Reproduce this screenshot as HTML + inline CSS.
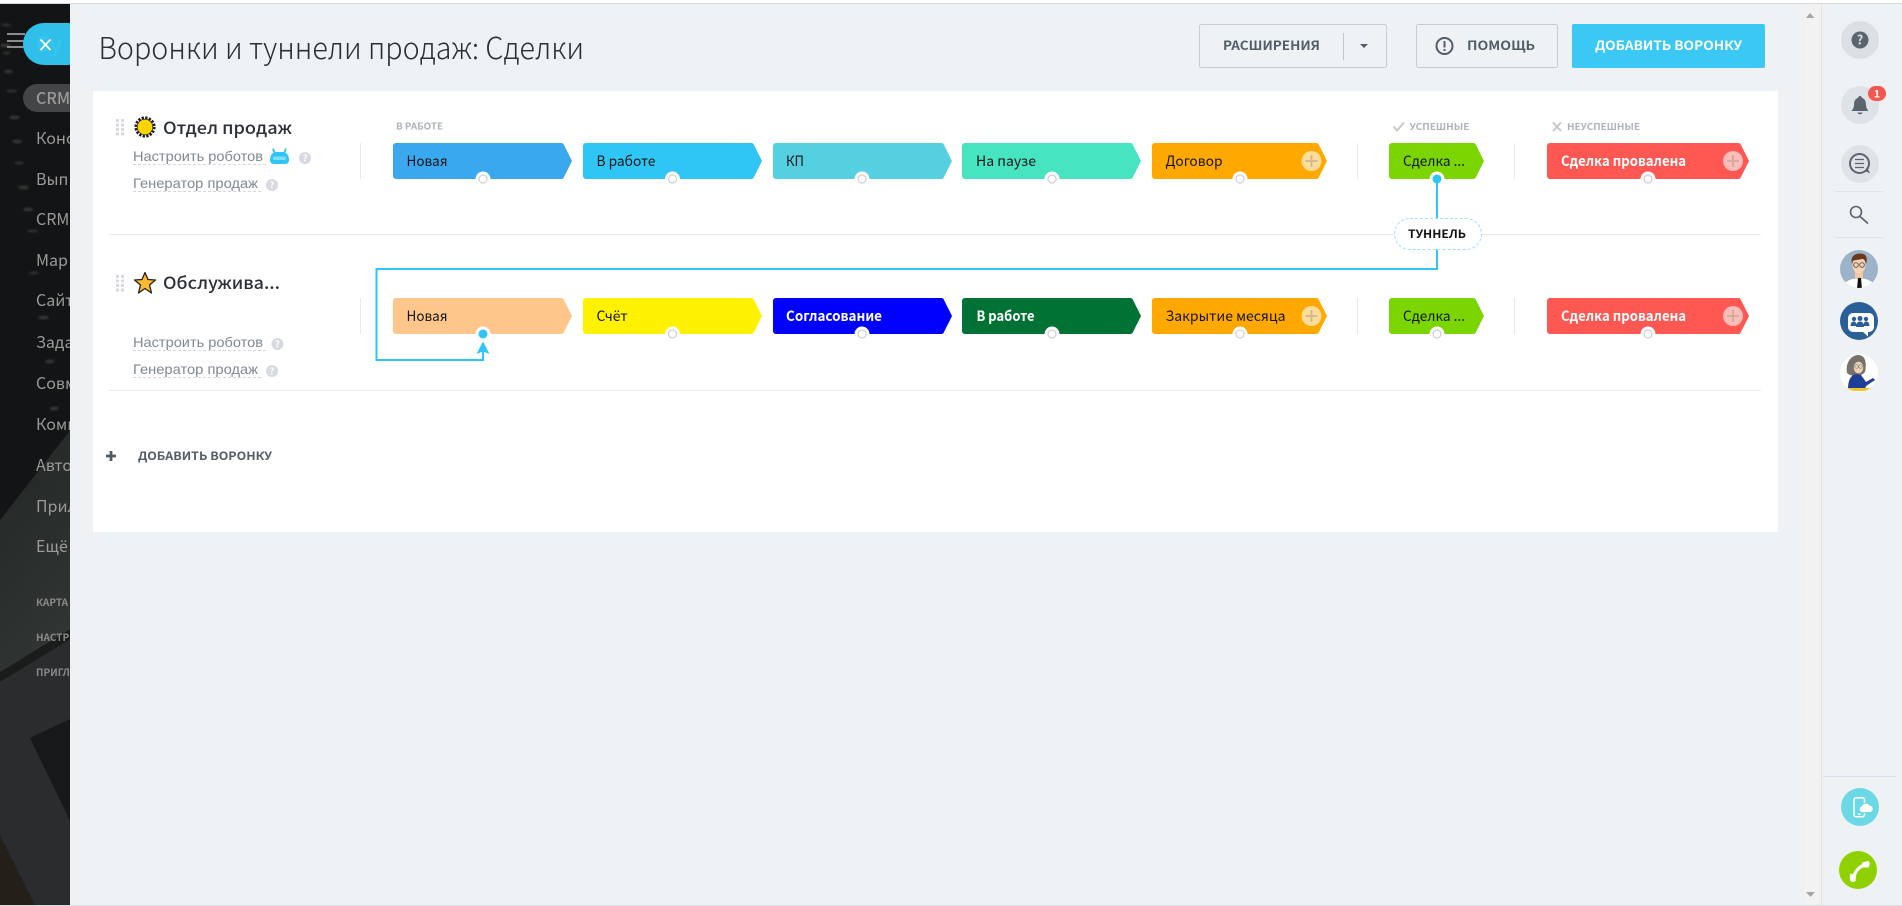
<!DOCTYPE html>
<html lang="ru"><head><meta charset="utf-8"><title>Воронки и туннели продаж: Сделки</title>
<style>
html,body{margin:0;padding:0;width:1902px;height:906px;overflow:hidden;background:#fff}
svg{display:block}
text{font-family:"Noto Sans CJK SC","Liberation Sans",sans-serif}
.c{font-size:14px;fill:#151515}
.w{font-size:14px;fill:#fff;font-weight:700}
.l{font-family:"Liberation Sans","Noto Sans CJK SC",sans-serif;font-size:14px;fill:#808892}
.m{font-size:16px;fill:#9a9a9a}
.s{font-size:10px;fill:#8a8a8a;font-weight:700}
.h{font-size:9.500px;fill:#aeb3ba;font-weight:700}
.t{font-size:17px;fill:#2b2f36;font-weight:500}
.b{font-size:12.500px;font-weight:700;fill:#535c69}
.q{font-size:9px;font-weight:700;fill:#fff;text-anchor:middle}
</style></head><body>
<svg xmlns="http://www.w3.org/2000/svg" width="1902" height="906" viewBox="0 0 1902 906">
<defs>
<path id="c179" d="M0 3a3 3 0 0 1 3-3H168a3 3 0 0 1 3 2L179 18L171 34a3 3 0 0 1-3 2H3a3 3 0 0 1-3-3Z"/>
<path id="c175" d="M0 3a3 3 0 0 1 3-3H164a3 3 0 0 1 3 2L175 18L167 34a3 3 0 0 1-3 2H3a3 3 0 0 1-3-3Z"/>
<path id="c95" d="M0 3a3 3 0 0 1 3-3H84a3 3 0 0 1 3 2L95 18L87 34a3 3 0 0 1-3 2H3a3 3 0 0 1-3-3Z"/>
<path id="c202" d="M0 3a3 3 0 0 1 3-3H191a3 3 0 0 1 3 2L202 18L194 34a3 3 0 0 1-3 2H3a3 3 0 0 1-3-3Z"/>
<g id="dot"><circle r="7.500" fill="#fff"/><circle r="4" fill="#fff" stroke="#cfd2d6" stroke-width="1.300"/></g>
<g id="plus"><circle r="10" fill="#fff" fill-opacity=".6"/><path d="M-6 0H6M0-6V6" stroke="#b3a48a" stroke-opacity=".65" stroke-width="1.800"/></g>
<g id="drag" fill="#d5d8dc"><rect x="0" y="0" width="3" height="3"/><rect x="5" y="0" width="3" height="3"/><rect x="0" y="4.500" width="3" height="3"/><rect x="5" y="4.500" width="3" height="3"/><rect x="0" y="9" width="3" height="3"/><rect x="5" y="9" width="3" height="3"/><rect x="0" y="13.500" width="3" height="3"/><rect x="5" y="13.500" width="3" height="3"/></g>
<clipPath id="a1"><circle cx="1859" cy="269" r="19"/></clipPath>
<clipPath id="a3"><circle cx="1859" cy="373" r="19"/></clipPath>
<linearGradient id="sb" x1="0" y1="0" x2="0.35" y2="1"><stop offset="0" stop-color="#1a1b1a"/><stop offset=".3" stop-color="#262a29"/><stop offset="1" stop-color="#303433"/></linearGradient>
<filter id="bl" x="-20%" y="-20%" width="140%" height="140%"><feGaussianBlur stdDeviation="1"/></filter>
</defs>

<rect width="1902" height="906" fill="#fff"/>
<rect x="0" y="3" width="1902" height="1" fill="#d9dcdf"/>

<!-- left sidebar -->
<rect x="0" y="4" width="72" height="901" fill="#131415"/>
<polygon points="0,520 72,428 72,647 0,673" fill="url(#sb)"/>
<polygon points="0,672 72,628 72,640 0,684" fill="#1a1c1c"/>
<polygon points="0,682 72,638 72,905 0,905" fill="#2a2c2e"/>
<polygon points="30,738 72,718 72,825" fill="#171819"/>
<polygon points="0,835 35,905 0,905" fill="#241f19"/>
<g fill="#3a3a3a" filter="url(#bl)"><rect x="2" y="24" width="8" height="2"/><rect x="1" y="44" width="9" height="3"/><rect x="3" y="52" width="7" height="2"/><rect x="5" y="70" width="7" height="3"/><rect x="7" y="90" width="9" height="2"/><rect x="10" y="116" width="9" height="3"/><rect x="13" y="140" width="8" height="3"/><rect x="15" y="162" width="8" height="2"/><rect x="19" y="186" width="9" height="3"/><rect x="24" y="208" width="8" height="3"/><rect x="28" y="230" width="9" height="2"/><rect x="30" y="272" width="8" height="2"/><rect x="39" y="316" width="9" height="3"/><rect x="46" y="360" width="8" height="3"/><rect x="50" y="407" width="8" height="3"/></g>

<g fill="#8c8c8c"><rect x="7" y="33" width="18" height="2"/><rect x="7" y="40" width="18" height="2"/><rect x="7" y="46" width="18" height="2"/></g>
<path d="M72 23H44a21 21 0 0 0 0 42H72Z" fill="#2fbfe9"/>
<text x="36" y="52" font-size="21" fill="#37c4ee" font-weight="700">Бу</text>
<path d="M40.500 39.500L50.500 50M50.500 39.500L40.500 50" stroke="#fff" stroke-width="1.800" fill="none"/>
<rect x="23" y="84" width="70" height="28" rx="14" fill="#444546"/>
<text class="m" x="36" y="104" font-weight="500">CRM</text>
<text class="m" x="36" y="144">Конс</text>
<text class="m" x="36" y="185">Вып</text>
<text class="m" x="36" y="225">CRM</text>
<text class="m" x="36" y="266">Мар</text>
<text class="m" x="36" y="306">Сайт</text>
<text class="m" x="36" y="348">Зада</text>
<text class="m" x="36" y="389">Совм</text>
<text class="m" x="36" y="430">Комм</text>
<text class="m" x="36" y="471">Авто</text>
<text class="m" x="36" y="512">Прил</text>
<text class="m" x="36" y="552">Ещё</text>
<text class="s" x="36" y="606">КАРТА</text>
<text class="s" x="36" y="641">НАСТР</text>
<text class="s" x="36" y="676">ПРИГЛ</text>

<!-- main -->
<rect x="70" y="4" width="1832" height="901" fill="#eef2f4"/>
<rect x="1804" y="4" width="17" height="901" fill="#f2f2f2"/>
<rect x="1821" y="4" width="1" height="901" fill="#dfe3e7"/>
<rect x="0" y="905" width="1902" height="1" fill="#d9dcdf"/>
<path d="M1806 18L1810 13L1814.500 18Z" fill="#a6a6a6"/>
<path d="M1806 892L1810.500 897L1815 892Z" fill="#a6a6a6"/>

<text x="98.500" y="59" font-size="30" font-weight="300" fill="#2b2f36" textLength="485.500" lengthAdjust="spacingAndGlyphs">Воронки и туннели продаж: Сделки</text>

<rect x="1199.500" y="24.500" width="187" height="43" rx="2" fill="none" stroke="#c6cdd3"/>
<text class="b" x="1223" y="50" textLength="97" lengthAdjust="spacingAndGlyphs">РАСШИРЕНИЯ</text>
<rect x="1343" y="33" width="1" height="27" fill="#c0c6cc"/>
<path d="M1360 44H1368L1364 48Z" fill="#535c69"/>
<rect x="1416.500" y="24.500" width="141" height="43" rx="2" fill="none" stroke="#c6cdd3"/>
<circle cx="1444.500" cy="46" r="8" fill="none" stroke="#535c69" stroke-width="2"/>
<rect x="1443.500" y="41" width="2" height="6.500" fill="#535c69"/><rect x="1443.500" y="49" width="2" height="2" fill="#535c69"/>
<text class="b" x="1467" y="50" textLength="68" lengthAdjust="spacingAndGlyphs">ПОМОЩЬ</text>
<rect x="1572" y="24" width="193" height="44" rx="2" fill="#3bc8f5"/>
<text class="b" style="fill:#fff" x="1595" y="50" textLength="147" lengthAdjust="spacingAndGlyphs">ДОБАВИТЬ ВОРОНКУ</text>

<!-- card -->
<rect x="93" y="91" width="1685" height="441" fill="#fff"/>
<rect x="109" y="234" width="1652" height="1" fill="#e9ebed"/>
<rect x="109" y="390" width="1652" height="1" fill="#e9ebed"/>

<!-- left block row 1 -->
<use href="#drag" x="116" y="119"/>
<circle cx="145" cy="127" r="9.300" fill="none" stroke="#1c1c1c" stroke-width="2.600" stroke-dasharray="2.300 1.350"/>
<circle cx="145" cy="127" r="7.800" fill="#ffd400" stroke="#2a2a2a" stroke-width=".8"/>
<text class="t" x="163" y="134" textLength="129" lengthAdjust="spacingAndGlyphs">Отдел продаж</text>
<text class="l" x="133" y="161" textLength="130" lengthAdjust="spacingAndGlyphs">Настроить роботов</text>
<path d="M133 164.500H267" stroke="#d5d7db" stroke-dasharray="3 2"/>
<path d="M273 148.500L275 153.500M286 148.500L284 153.500" stroke="#2fc6f6" stroke-width="1.800"/>
<path d="M276 152H283C287 152 289 156 289 160C289 163 287 164 285 164H274C272 164 270 163 270 160C270 156 272 152 276 152Z" fill="#2fc6f6"/>
<rect x="273" y="156.500" width="13" height="3.500" rx="1.700" fill="#fff" fill-opacity=".4"/>
<circle cx="305" cy="158" r="6" fill="#d8dae2"/><text class="q" x="305" y="161.500">?</text>
<text class="l" x="133" y="188" textLength="125" lengthAdjust="spacingAndGlyphs">Генератор продаж</text>
<path d="M133 191.500H261" stroke="#d5d7db" stroke-dasharray="3 2"/>
<circle cx="272" cy="185" r="6" fill="#d8dae2"/><text class="q" x="272" y="188.500">?</text>
<rect x="360" y="143" width="1" height="36" fill="#e9ebed"/>
<rect x="1357" y="143" width="1" height="36" fill="#e9ebed"/>
<rect x="1514" y="143" width="1" height="36" fill="#e9ebed"/>

<!-- left block row 2 -->
<use href="#drag" x="116" y="275"/>
<polygon points="145,272.500 148,279.500 155.500,280 149.500,285 151.500,293 145,288.500 138.500,293 140.500,285 134.500,280 142,279.500" fill="#fdb92f" stroke="#222" stroke-width="1.300" stroke-linejoin="round"/>
<text class="t" x="163" y="289" textLength="117" lengthAdjust="spacingAndGlyphs">Обслужива...</text>
<text class="l" x="133" y="347" textLength="130" lengthAdjust="spacingAndGlyphs">Настроить роботов</text>
<path d="M133 350.500H267" stroke="#d5d7db" stroke-dasharray="3 2"/>
<circle cx="277.500" cy="344" r="6" fill="#d8dae2"/><text class="q" x="277.500" y="347.500">?</text>
<text class="l" x="133" y="374" textLength="125" lengthAdjust="spacingAndGlyphs">Генератор продаж</text>
<path d="M133 377.500H261" stroke="#d5d7db" stroke-dasharray="3 2"/>
<circle cx="272" cy="371" r="6" fill="#d8dae2"/><text class="q" x="272" y="374.500">?</text>
<rect x="360" y="298" width="1" height="36" fill="#e9ebed"/>
<rect x="1357" y="298" width="1" height="36" fill="#e9ebed"/>
<rect x="1514" y="298" width="1" height="36" fill="#e9ebed"/>

<path d="M106 456H116M111 451V461" stroke="#535c69" stroke-width="2.800"/>
<text class="b" style="font-size:11.500px" x="138" y="460" textLength="134" lengthAdjust="spacingAndGlyphs">ДОБАВИТЬ ВОРОНКУ</text>

<!-- headers -->
<text class="h" x="396" y="129.500" textLength="47" lengthAdjust="spacingAndGlyphs">В РАБОТЕ</text>
<path d="M1393.500 126.500L1397 130.500L1404 122.500" fill="none" stroke="#c5c8cc" stroke-width="2"/>
<text class="h" x="1409.500" y="130" textLength="60" lengthAdjust="spacingAndGlyphs">УСПЕШНЫЕ</text>
<path d="M1553 122.500L1561 131M1561 122.500L1553 131" fill="none" stroke="#c5c8cc" stroke-width="2"/>
<text class="h" x="1567" y="130" textLength="73" lengthAdjust="spacingAndGlyphs">НЕУСПЕШНЫЕ</text>

<!-- chips row 1 -->
<use href="#c179" x="393" y="143" fill="#39a8ef"/>
<use href="#c179" x="583" y="143" fill="#2fc6f6"/>
<use href="#c179" x="773" y="143" fill="#55d0e0"/>
<use href="#c179" x="962" y="143" fill="#47e4c2"/>
<use href="#c175" x="1152" y="143" fill="#ffa900"/>
<use href="#c95" x="1389" y="143" fill="#7bd500"/>
<use href="#c202" x="1547" y="143" fill="#ff5752"/>
<text class="c" x="406.500" y="166" textLength="41" lengthAdjust="spacingAndGlyphs">Новая</text>
<text class="c" x="596.500" y="166" textLength="59" lengthAdjust="spacingAndGlyphs">В работе</text>
<text class="c" x="786" y="166" textLength="18" lengthAdjust="spacingAndGlyphs">КП</text>
<text class="c" x="976" y="166" textLength="60" lengthAdjust="spacingAndGlyphs">На паузе</text>
<text class="c" x="1165.500" y="166" textLength="57" lengthAdjust="spacingAndGlyphs">Договор</text>
<text class="c" x="1403" y="166" textLength="62" lengthAdjust="spacingAndGlyphs">Сделка ...</text>
<text class="w" x="1561" y="166" textLength="125" lengthAdjust="spacingAndGlyphs">Сделка провалена</text>
<use href="#plus" x="1311.500" y="161"/><use href="#plus" x="1733" y="161"/>

<!-- chips row 2 -->
<use href="#c179" x="393" y="298" fill="#fec68a"/>
<use href="#c179" x="583" y="298" fill="#fff200"/>
<use href="#c179" x="773" y="298" fill="#0000ff"/>
<use href="#c179" x="962" y="298" fill="#007233"/>
<use href="#c175" x="1152" y="298" fill="#ffa900"/>
<use href="#c95" x="1389" y="298" fill="#7bd500"/>
<use href="#c202" x="1547" y="298" fill="#ff5752"/>
<text class="c" x="406.500" y="321" textLength="41" lengthAdjust="spacingAndGlyphs">Новая</text>
<text class="c" x="596.500" y="321" textLength="31" lengthAdjust="spacingAndGlyphs">Счёт</text>
<text class="w" x="786" y="321" textLength="96" lengthAdjust="spacingAndGlyphs">Согласование</text>
<text class="w" x="976.500" y="321" textLength="58" lengthAdjust="spacingAndGlyphs">В работе</text>
<text class="c" x="1165.500" y="321" textLength="120" lengthAdjust="spacingAndGlyphs">Закрытие месяца</text>
<text class="c" x="1403" y="321" textLength="62" lengthAdjust="spacingAndGlyphs">Сделка ...</text>
<text class="w" x="1561" y="321" textLength="125" lengthAdjust="spacingAndGlyphs">Сделка провалена</text>
<use href="#plus" x="1311.500" y="316"/><use href="#plus" x="1733" y="316"/>

<!-- connectors -->
<use href="#dot" x="483" y="179"/><use href="#dot" x="672.500" y="179"/><use href="#dot" x="862" y="179"/><use href="#dot" x="1052" y="179"/><use href="#dot" x="1240" y="179"/><use href="#dot" x="1648" y="179"/>
<use href="#dot" x="672.500" y="334"/><use href="#dot" x="862" y="334"/><use href="#dot" x="1052" y="334"/><use href="#dot" x="1240" y="334"/><use href="#dot" x="1437" y="334"/><use href="#dot" x="1648" y="334"/>
<circle cx="1437" cy="179" r="7.500" fill="#fff"/>
<circle cx="483" cy="334" r="7.500" fill="#fff"/>
<path d="M1437 179V269H376.500V360H483V350" fill="none" stroke="#2fc6f6" stroke-width="2"/>
<circle cx="1437" cy="179" r="4.500" fill="#2fc6f6"/>
<circle cx="483" cy="334" r="4.500" fill="#2fc6f6"/>
<path d="M483 341.500L489.500 354L483 351.500L476.500 354Z" fill="#2fc6f6"/>
<rect x="1394.500" y="218.500" width="87" height="31" rx="15.500" fill="#fff" stroke="#9fe0f6" stroke-dasharray="3 2"/>
<text x="1408" y="238" font-size="11.500" font-weight="700" fill="#111" textLength="58" lengthAdjust="spacingAndGlyphs">ТУННЕЛЬ</text>

<!-- right panel -->
<circle cx="1860" cy="40" r="19" fill="#dcdfe3"/>
<circle cx="1860" cy="40" r="8.500" fill="#5c6470"/>
<text x="1860" y="44.500" font-size="12.500" font-weight="700" fill="#dcdfe3" text-anchor="middle">?</text>

<circle cx="1860" cy="105" r="19" fill="#dfe2e6"/>
<path d="M1860 96c-1 0-1.800.7-1.800 1.700-3 1-4.200 3.700-4.200 6.800 0 3.200-1 4.500-2.500 6.500h17c-1.500-2-2.500-3.300-2.500-6.500 0-3.100-1.200-5.800-4.200-6.800 0-1-.8-1.700-1.800-1.700zM1857.500 112.500h5c0 1-1 1.800-2.500 1.800s-2.500-.8-2.500-1.800z" fill="#5c6470"/>
<rect x="1868" y="86" width="18" height="15" rx="7.500" fill="#f4574d"/>
<text x="1877" y="97.500" font-size="10.500" font-weight="700" fill="#fff" text-anchor="middle">1</text>

<circle cx="1860" cy="164" r="19" fill="#dfe2e6"/>
<circle cx="1859.500" cy="163.500" r="9.500" fill="none" stroke="#5c6470" stroke-width="2"/>
<path d="M1865 171L1870 173.500L1867 167" fill="#5c6470"/>
<path d="M1855 159.500H1864M1855 163.500H1864M1855 167.500H1864" stroke="#5c6470" stroke-width="1.200"/>

<rect x="1835" y="191" width="48" height="1" fill="#dfe2e6"/>
<circle cx="1856" cy="212" r="5.500" fill="none" stroke="#5c6470" stroke-width="1.600"/>
<path d="M1860 216.500L1868 223.500" stroke="#5c6470" stroke-width="1.800"/>
<rect x="1835" y="237" width="48" height="1" fill="#dfe2e6"/>

<g clip-path="url(#a1)">
<rect x="1840" y="250" width="38" height="38" fill="#9db3c9"/>
<path d="M1842 290C1843 281 1850 279 1859 278C1868 279 1875 281 1876 290Z" fill="#fff"/>
<rect x="1855" y="270" width="8" height="9" fill="#f2c8a5"/>
<ellipse cx="1859" cy="265" rx="6.500" ry="8.500" fill="#f6d2b3"/>
<path d="M1852 264C1850 256 1855 253.500 1860 253.500C1866 253.500 1868 257 1866 264C1865 260 1864 259 1862 259C1858 260 1854 260 1853 261Z" fill="#6b3a1e"/>
<circle cx="1856" cy="265" r="2.300" fill="none" stroke="#555" stroke-width=".9"/>
<circle cx="1862" cy="265" r="2.300" fill="none" stroke="#555" stroke-width=".9"/>
<path d="M1858 278H1861L1862 289H1857Z" fill="#111"/>
</g>
<circle cx="1859" cy="321" r="19" fill="#2a6098"/>
<path d="M1853 313H1869a5 5 0 0 1 5 5V327a5 5 0 0 1-5 5H1868L1868 336.500L1863 332H1853a5 5 0 0 1-5-5V318a5 5 0 0 1 5-5Z" fill="#fff"/>
<g fill="#2a6098"><circle cx="1854" cy="319" r="2.200"/><circle cx="1860" cy="318.500" r="2.500"/><circle cx="1866" cy="319" r="2.200"/><path d="M1850.500 326C1850.500 323 1852 321.500 1854 321.500C1855.500 321.500 1856.500 323 1856.500 326ZM1856 327C1856 323 1858 321.500 1860 321.500C1862 321.500 1864 323 1864 327ZM1863.500 326C1863.500 323 1864.500 321.500 1866 321.500C1868 321.500 1869.500 323 1869.500 326Z"/></g>
<circle cx="1859" cy="373" r="19" fill="#fff"/>
<g clip-path="url(#a3)">
<path d="M1847 373C1845 362 1852 355 1858 355C1865 355 1867 362 1865 372C1861 377 1851 377 1847 373Z" fill="#77716c"/>
<ellipse cx="1858.500" cy="367.500" rx="4.800" ry="5.800" fill="#f6d2b3"/>
<circle cx="1856.500" cy="366.500" r="1.800" fill="none" stroke="#5f8f8f" stroke-width=".7"/>
<circle cx="1860.500" cy="366.500" r="1.800" fill="none" stroke="#5f8f8f" stroke-width=".7"/>
<path d="M1848 389C1848 380 1851 375 1856 374L1861 375L1866 382L1873 378L1875 380L1866 386L1865 389Z" fill="#1e3f95"/>
<rect x="1845" y="388" width="30" height="3" fill="#f0c330"/>
</g>

<rect x="1823" y="776" width="73" height="1" fill="#d9e2ea"/>
<circle cx="1860" cy="807" r="19" fill="#6cd8e6"/>
<rect x="1854" y="797.800" width="10.500" height="19" rx="2" fill="none" stroke="#fff" stroke-width="1.500"/>
<rect x="1858" y="813.500" width="2.500" height="1.500" fill="#fff"/>
<g stroke="#6cd8e6" stroke-width="1"><path d="M1862 812.500a3.300 3.300 0 0 1-.5-6.400 4.700 4.700 0 0 1 8.300-.9 3.700 3.700 0 0 1 .5 7.300Z" fill="#fff"/></g>
<circle cx="1858" cy="870" r="19" fill="#8fd100"/>
<path d="M1866.500 864.500C1860 865.500 1855 871 1853.500 878" fill="none" stroke="#fff" stroke-width="3.200" stroke-linecap="round"/>
<path d="M1862 862.500L1868 861C1869.500 861 1870 863 1869.500 865L1868.500 867.500L1863 867.500Z" fill="#fff"/>
<path d="M1850.500 873.500L1856 875.500L1855.500 881C1854 882.500 1851.500 882 1850.500 881C1849.500 879 1849.500 876 1850.500 873.500Z" fill="#fff"/>
</svg>
</body></html>
